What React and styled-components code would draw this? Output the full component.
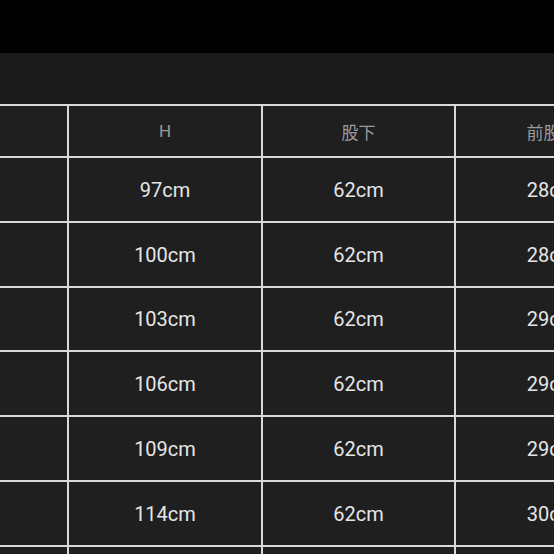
import styled, { createGlobalStyle } from 'styled-components';

const GlobalStyle = createGlobalStyle`
  html, body {
    margin: 0;
    padding: 0;
    background: #1a1a1a;
    overflow: hidden;
  }
  body {
    font-family: Roboto, "Noto Sans CJK JP", sans-serif;
  }
`;

const Page = styled.div`
  width: 554px;
  height: 554px;
  overflow: hidden;
  background: #1a1a1a;
`;

const StatusBar = styled.div`
  height: 53px;
  background: #000;
`;

const Body = styled.div`
  padding-top: 51px;
`;

const Table = styled.div`
  display: grid;
  grid-template-columns: 192px 192px 191px 192px;
  grid-template-rows: 50px 63px 63px 62px 63px 63px 63px;
  grid-auto-rows: 63px;
  gap: 2px;
  padding: 2px;
  margin-left: -127px;
  width: max-content;
  background: #d9d9d9;
`;

const Cell = styled.div`
  background: #1f1f1f;
  display: flex;
  align-items: center;
  justify-content: center;
  color: ${p => (p.$head ? '#9b9b9b' : '#e6e6e6')};
  font-size: ${p => (p.$head ? '17px' : '20px')};
  white-space: nowrap;
`;

const headers = ['', 'H', '股下', '前股上'];

const rows = [
  ['', '97cm', '62cm', '28cm'],
  ['', '100cm', '62cm', '28cm'],
  ['', '103cm', '62cm', '29cm'],
  ['', '106cm', '62cm', '29cm'],
  ['', '109cm', '62cm', '29cm'],
  ['', '114cm', '62cm', '30cm'],
  ['', '119cm', '62cm', '30cm'],
];

export default function App() {
  return (
    <Page>
      <GlobalStyle />
      <StatusBar />
      <Body>
        <Table>
          {headers.map((h, i) => (
            <Cell key={'h' + i} $head>
              {h}
            </Cell>
          ))}
          {rows.map((row, r) =>
            row.map((v, i) => <Cell key={r + '-' + i}>{v}</Cell>)
          )}
        </Table>
      </Body>
    </Page>
  );
}
